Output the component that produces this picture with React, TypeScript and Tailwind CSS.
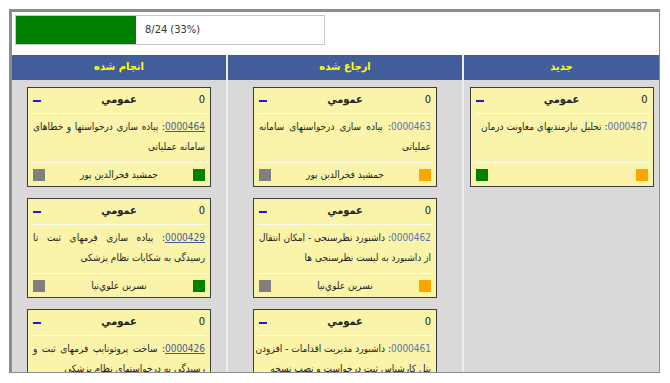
type Task = {
  id: string;
  first: string;
  second: string;
  name: string;
  right: string;
  left: string;
  visited?: boolean;
};

type Column = {
  title: string;
  width: string;
  tasks: Task[];
};

const columns: Column[] = [
  {
    title: 'جدید',
    width: 'w-[197px]',
    tasks: [
      {
        id: '0000487',
        first: 'تحلیل نیازمندیهای معاونت درمان',
        second: '',
        name: '',
        right: 'bg-[#ffa500]',
        left: 'bg-[#008000]',
      },
    ],
  },
  {
    title: 'ارجاع شده',
    width: 'w-[236px]',
    tasks: [
      {
        id: '0000463',
        first: 'پیاده سازی درخواستهای سامانه',
        second: 'عملیاتی',
        name: 'جمشید فخرالدین پور',
        right: 'bg-[#ffa500]',
        left: 'bg-[#808080]',
      },
      {
        id: '0000462',
        first: 'داشبورد نظرسنجی - امکان انتقال',
        second: 'از داشبورد به لیست نظرسنجی ها',
        name: 'نسرین علوي‌نیا',
        right: 'bg-[#ffa500]',
        left: 'bg-[#808080]',
      },
      {
        id: '0000461',
        first: 'داشبورد مدیریت اقدامات - افزودن',
        second: 'پنل کارشناس ثبت درخواست و نصب نسخه',
        name: 'نسرین علوي‌نیا',
        right: 'bg-[#ffa500]',
        left: 'bg-[#808080]',
      },
    ],
  },
  {
    title: 'انجام شده',
    width: 'w-[214px]',
    tasks: [
      {
        id: '0000464',
        first: 'پیاده سازی درخواستها و خطاهای',
        second: 'سامانه عملیاتی',
        name: 'جمشید فخرالدین پور',
        right: 'bg-[#008000]',
        left: 'bg-[#808080]',
        visited: true,
      },
      {
        id: '0000429',
        first: 'پیاده سازی فرمهای ثبت تا',
        second: 'رسیدگی به شکایات نظام پزشکی',
        name: 'نسرین علوي‌نیا',
        right: 'bg-[#008000]',
        left: 'bg-[#808080]',
        visited: true,
      },
      {
        id: '0000426',
        first: 'ساخت پروتوتایپ فرمهای ثبت و',
        second: 'رسیدگی به درخواستهای نظام پزشکی',
        name: 'نسرین علوي‌نیا',
        right: 'bg-[#008000]',
        left: 'bg-[#808080]',
        visited: true,
      },
    ],
  },
];

function TaskCard({ task }: { task: Task }) {
  return (
    <div className="w-[184px] h-[100px] mx-auto mb-[11px] shrink-0 bg-[#faf4aa] border border-[#3c3c3c] flex flex-col">
      {/* header */}
      <div className="h-[25px] flex items-center px-[5px]">
        <span className="flex-1 text-right">0</span>
        <span className="font-bold">عمومي</span>
        <span className="flex-1 flex justify-end">
          <span className="block w-[8px] h-[2px] bg-[#1c1ccc]" />
        </span>
      </div>
      <div className="mx-[4px] h-px bg-[#fffdea]" />

      {/* body: lines broken as in the board */}
      <div className="h-[48px] px-[5px] pt-[3px] leading-[20px] text-[10px] overflow-hidden">
        <div
          className={`whitespace-nowrap ${
            task.second ? 'text-justify [text-align-last:justify]' : 'text-right'
          }`}
        >
          <a className={task.visited ? 'text-[#4b5a98] underline' : 'text-[#5a6fb4]'}>
            {task.id}
          </a>
          : {task.first}
        </div>
        {task.second && <div className="whitespace-nowrap text-right">{task.second}</div>}
      </div>
      <div className="mx-[4px] h-px bg-[#fffdea]" />

      {/* footer */}
      <div className="flex-1 flex items-center justify-between px-[5px]">
        <span className={`w-[12px] h-[12px] ${task.right}`} />
        <span className="text-[10px]">{task.name}</span>
        <span className={`w-[12px] h-[12px] ${task.left}`} />
      </div>
    </div>
  );
}

export default function App() {
  return (
    <div className="w-[670px] h-[383px] bg-white pt-[9px] pl-[9px] font-['DejaVu_Sans_Condensed','DejaVu_Sans',sans-serif] text-[11px] text-[#222]">
      <div className="w-[651px] h-[364px] bg-white border-[#8c8c8c] border-l-[3px] border-t-[3px] border-r border-b overflow-hidden flex flex-col">
        {/* progress */}
        <div className="ml-[3px] mt-[3px] w-[310px] h-[30px] border border-[#c8c8c8] flex items-center">
          <div className="w-[120px] h-full bg-[#008000]" />
          <span className="ml-[9px] text-[#333]">8/24 (33%)</span>
        </div>

        {/* board */}
        <div dir="rtl" className="mt-[10px] flex flex-1 min-h-0">
          {columns.map((col, i) => (
            <div
              key={col.title}
              className={`${col.width} flex flex-col ${
                i < columns.length - 1 ? 'border-l-2 border-[#eeeeee]' : ''
              }`}
            >
              <div className="h-[25px] bg-[#415e9b] text-[#ffff00] font-bold text-[11px] flex items-center justify-center">
                {col.title}
              </div>
              <div className="flex-1 bg-[#d9d9d9] pt-[7px] flex flex-col overflow-hidden">
                {col.tasks.map((t) => (
                  <TaskCard key={t.id} task={t} />
                ))}
              </div>
            </div>
          ))}
        </div>
      </div>
    </div>
  );
}
